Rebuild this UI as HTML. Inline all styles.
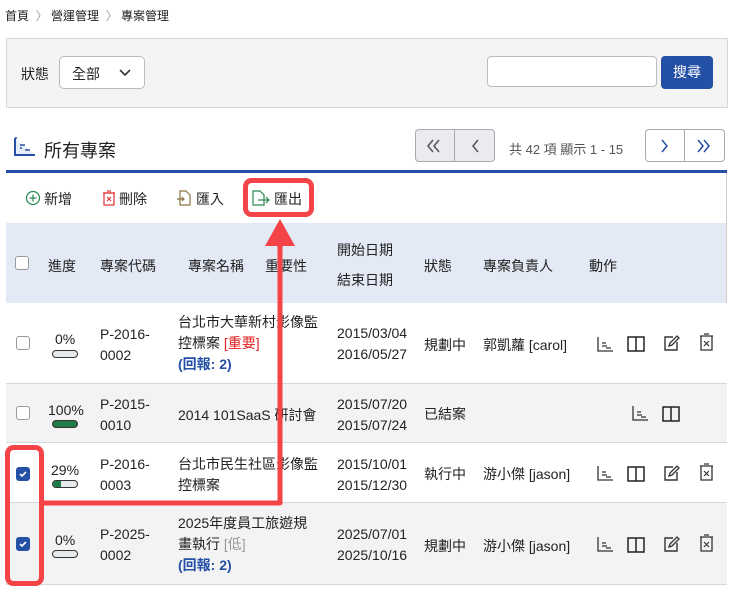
<!DOCTYPE html>
<html><head><meta charset="utf-8"><style>
*{box-sizing:border-box;margin:0;padding:0}
body{width:735px;height:594px;background:#fff;font-family:"Liberation Sans","Noto Sans CJK TC",sans-serif;color:#222;font-size:14px;position:relative;overflow:hidden}
.a{position:absolute;white-space:nowrap}
.cb{position:absolute;width:14px;height:14px;border:1px solid #999;border-radius:3px;background:#fff}
.cb.on{background:#2450a6;border-color:#2450a6}
.bar{position:absolute;width:26px;height:8px;border:1.5px solid #333;border-radius:5px;background:#e6e9ec;overflow:hidden}
.row{position:absolute;left:6px;width:721px;border-bottom:1px solid #d4d7db}
.blue{color:#2450a6;font-weight:bold}
</style></head><body>
<div class="a" style="left:5px;top:7px;font-size:12px">首頁 <span style="color:#999">&nbsp;〉</span> 營運管理 <span style="color:#999">&nbsp;〉</span> 專案管理</div>
<div class="a" style="left:6px;top:38px;width:722px;height:70px;background:#f4f4f4;border:1px solid #d8d8d8"></div>
<div class="a" style="left:21px;top:64px;font-size:14px">狀態</div>
<div class="a" style="left:59px;top:56px;width:86px;height:33px;border:1px solid #bbb;border-radius:5px;background:#fff"></div>
<div class="a" style="left:72px;top:64px">全部</div>
<svg class="a" style="left:119px;top:69px" width="12" height="8"><path d="M1 1l5 5 5-5" fill="none" stroke="#333" stroke-width="1.6"/></svg>
<div class="a" style="left:487px;top:56px;width:170px;height:31px;border:1px solid #bbb;border-radius:4px;background:#fff"></div>
<div class="a" style="left:661px;top:56px;width:52px;height:33px;background:#2450a6;border-radius:4px;color:#fff;text-align:center;line-height:33px">搜尋</div>

<svg class="a" style="left:13px;top:136px" width="24" height="22"><path d="M2 2v17h20" fill="#e8eef8" stroke="#2450a6" stroke-width="2"/><path d="M2 2h2M7 9h5M7 12h2M12 14h5" stroke="#2450a6" stroke-width="1.5"/></svg>
<div class="a" style="left:44px;top:137px;font-size:18px">所有專案</div>
<div class="a" style="left:415px;top:129px;width:80px;height:33px;background:#e9ebee;border:1px solid #aaa;border-radius:4px"></div>
<div class="a" style="left:454px;top:129px;width:1px;height:33px;background:#aaa"></div>
<svg class="a" style="left:426px;top:138px" width="60" height="16"><path d="M7 2l-5 6 5 6M13 2l-5 6 5 6M52 2l-5 6 5 6" fill="none" stroke="#555" stroke-width="1.5"/></svg>
<div class="a" style="left:509px;top:139px;font-size:13px;color:#555">共 42 項 顯示 1 - 15</div>
<div class="a" style="left:645px;top:129px;width:80px;height:33px;background:#fff;border:1px solid #aaa;border-radius:4px"></div>
<div class="a" style="left:684px;top:129px;width:1px;height:33px;background:#aaa"></div>
<svg class="a" style="left:658px;top:138px" width="60" height="16"><path d="M4 2l5 6-5 6M40 2l5 6-5 6M46 2l5 6-5 6" fill="none" stroke="#2450a6" stroke-width="1.5"/></svg>
<div class="a" style="left:6px;top:170px;width:721px;height:3px;background:#2450a6"></div>
<div class="a" style="left:726px;top:173px;width:1px;height:412px;background:#ccc"></div>

<div class="a" style="left:25px;top:190px"><svg width="16" height="16"><circle cx="8" cy="8" r="6.5" fill="none" stroke="#2a8a50" stroke-width="1.2"/><path d="M8 4.5v7M4.5 8h7" stroke="#2a8a50" stroke-width="1.2"/></svg></div>
<div class="a" style="left:44px;top:189px">新增</div>
<div class="a" style="left:102px;top:190px"><svg width="14" height="16"><rect x="2" y="3" width="10" height="12" fill="none" stroke="#d33" stroke-width="1.2"/><path d="M1 3h12M5 1h4M5 7l4 4M9 7l-4 4" stroke="#d33" stroke-width="1.2"/></svg></div>
<div class="a" style="left:119px;top:189px">刪除</div>
<div class="a" style="left:176px;top:190px"><svg width="16" height="16"><path d="M4 1h6l4 4v10H4z" fill="none" stroke="#8a7240" stroke-width="1.2"/><path d="M1 9h7M6 7l2 2-2 2" fill="none" stroke="#8a7240" stroke-width="1.2"/></svg></div>
<div class="a" style="left:196px;top:189px">匯入</div>
<div class="a" style="left:252px;top:190px"><svg width="18" height="16"><path d="M1 1h7l4 4v10H1z" fill="none" stroke="#2a8a50" stroke-width="1.2"/><path d="M6 10h11M14 7l3 3-3 3" fill="none" stroke="#2a8a50" stroke-width="1.2"/></svg></div>
<div class="a" style="left:274px;top:189px">匯出</div>

<div class="a" style="left:6px;top:223px;width:720px;height:80px;background:#e3e9f5"></div>
<div class="cb" style="left:15px;top:256px"></div>
<div class="a" style="left:48px;top:256px">進度</div>
<div class="a" style="left:100px;top:256px">專案代碼</div>
<div class="a" style="left:188px;top:256px">專案名稱</div>
<div class="a" style="left:265px;top:256px">重要性</div>
<div class="a" style="left:337px;top:240px">開始日期</div>
<div class="a" style="left:337px;top:270px">結束日期</div>
<div class="a" style="left:424px;top:256px">狀態</div>
<div class="a" style="left:483px;top:256px">專案負責人</div>
<div class="a" style="left:589px;top:256px">動作</div>

<div class="row" style="top:303px;height:81px;background:#fff"></div>
<div class="row" style="top:384px;height:59px;background:#f3f3f3"></div>
<div class="row" style="top:443px;height:60px;background:#fff"></div>
<div class="row" style="top:503px;height:82px;background:#f3f3f3"></div>

<div class="cb" style="left:16px;top:336px"></div>
<div class="a" style="left:55px;top:331px">0%</div>
<div class="bar" style="left:52px;top:350px"></div>
<div class="a" style="left:100px;top:324px;line-height:21px">P-2016-<br>0002</div>
<div class="a" style="left:178px;top:312px;line-height:21px">台北市大華新村影像監<br>控標案 <span style="color:#e02020">[重要]</span><br><span class="blue">(回報: 2)</span></div>
<div class="a" style="left:337px;top:323px;line-height:21px">2015/03/04<br>2016/05/27</div>
<div class="a" style="left:424px;top:335px">規劃中</div>
<div class="a" style="left:483px;top:335px">郭凱蘿 [carol]</div>

<div class="cb" style="left:16px;top:406px"></div>
<div class="a" style="left:48px;top:402px">100%</div>
<div class="bar" style="left:52px;top:420px;background:#1e7a48"></div>
<div class="a" style="left:100px;top:394px;line-height:21px">P-2015-<br>0010</div>
<div class="a" style="left:178px;top:405px">2014 101SaaS 研討會</div>
<div class="a" style="left:337px;top:394px;line-height:21px">2015/07/20<br>2015/07/24</div>
<div class="a" style="left:424px;top:404px">已結案</div>

<div class="cb on" style="left:16px;top:467px"><svg width="12" height="12" style="position:absolute;left:0;top:0"><path d="M3 6l2 2 4-4" fill="none" stroke="#fff" stroke-width="1.6"/></svg></div>
<div class="a" style="left:51px;top:462px">29%</div>
<div class="bar" style="left:52px;top:480px"><div style="width:8px;height:100%;background:#1e7a48"></div></div>
<div class="a" style="left:100px;top:454px;line-height:21px">P-2016-<br>0003</div>
<div class="a" style="left:178px;top:454px;line-height:21px">台北市民生社區影像監<br>控標案</div>
<div class="a" style="left:337px;top:454px;line-height:21px">2015/10/01<br>2015/12/30</div>
<div class="a" style="left:424px;top:464px">執行中</div>
<div class="a" style="left:483px;top:464px">游小傑 [jason]</div>

<div class="cb on" style="left:16px;top:537px"><svg width="12" height="12" style="position:absolute;left:0;top:0"><path d="M3 6l2 2 4-4" fill="none" stroke="#fff" stroke-width="1.6"/></svg></div>
<div class="a" style="left:55px;top:532px">0%</div>
<div class="bar" style="left:52px;top:550px"></div>
<div class="a" style="left:100px;top:524px;line-height:21px">P-2025-<br>0002</div>
<div class="a" style="left:178px;top:513px;line-height:21px">2025年度員工旅遊規<br>畫執行 <span style="color:#999">[低]</span><br><span class="blue">(回報: 2)</span></div>
<div class="a" style="left:337px;top:524px;line-height:21px">2025/07/01<br>2025/10/16</div>
<div class="a" style="left:424px;top:536px">規劃中</div>
<div class="a" style="left:483px;top:536px">游小傑 [jason]</div>

<svg class="a" style="left:0;top:0" width="735" height="594">
<defs>
<g id="ch"><path d="M1 1v14h15M5 7h4M5 10h5M9 12h5" fill="none" stroke="#333" stroke-width="1.3"/></g>
<g id="bk"><path d="M1 2h8v14H1zM9 2h8v14H9" fill="none" stroke="#222" stroke-width="1.5"/></g>
<g id="ed"><path d="M13 8v8H1V3h8" fill="none" stroke="#333" stroke-width="1.4"/><path d="M5 12l1-3 7-7 2 2-7 7z" fill="none" stroke="#333" stroke-width="1.3"/></g>
<g id="tr"><path d="M1 3h13M5 1h5M2 3h11v14H2z" fill="none" stroke="#333" stroke-width="1.3"/><path d="M5 8l5 5M10 8l-5 5" stroke="#333" stroke-width="1.2"/></g>
</defs>
<use href="#ch" x="597" y="336"/><use href="#bk" x="627" y="335"/><use href="#ed" x="664" y="334"/><use href="#tr" x="699" y="333"/>
<use href="#ch" x="632" y="405"/><use href="#bk" x="662" y="405"/>
<use href="#ch" x="597" y="465"/><use href="#bk" x="627" y="465"/><use href="#ed" x="664" y="464"/><use href="#tr" x="699" y="463"/>
<use href="#ch" x="597" y="536"/><use href="#bk" x="627" y="536"/><use href="#ed" x="664" y="535"/><use href="#tr" x="699" y="534"/>
<g fill="none" stroke="#f44448" stroke-width="5">
<rect x="245.5" y="180.5" width="66" height="34" rx="6"/>
<rect x="7.5" y="447.5" width="34" height="136" rx="6"/>
<path d="M280 242V503H40" stroke-linejoin="round"/>
</g>
<path d="M265 246L280 219L295 246z" fill="#f44448"/>
</svg>
</body></html>
